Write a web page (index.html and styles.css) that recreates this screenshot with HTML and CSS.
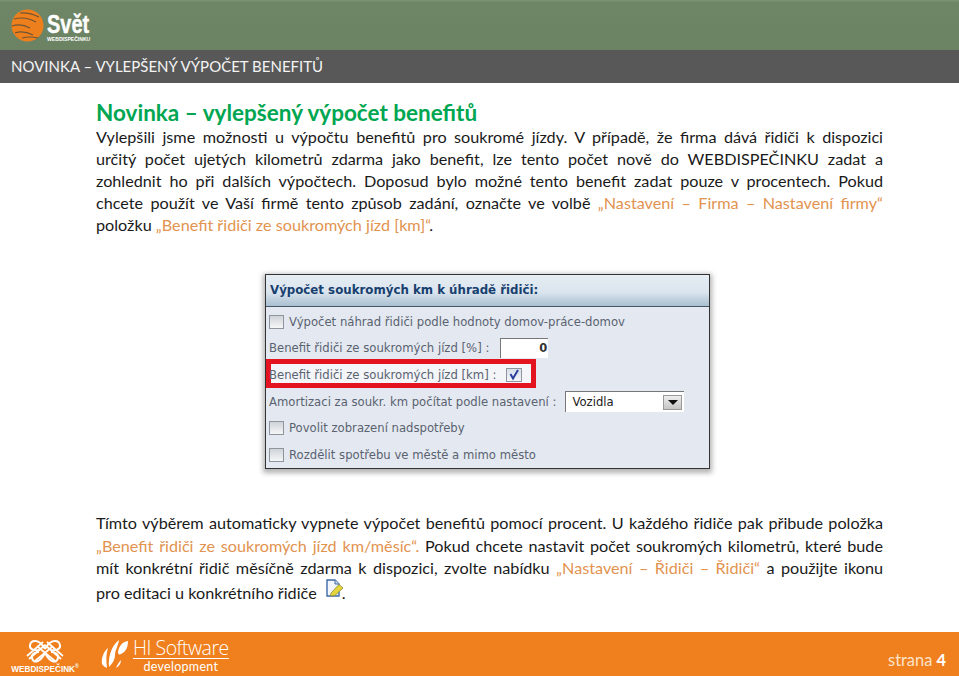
FILE: index.html
```html
<!DOCTYPE html>
<html lang="cs">
<head>
<meta charset="utf-8">
<title>Novinka</title>
<link rel="stylesheet" href="styles.css">
</head>
<body>
<div class="slide">
  <header class="top">
    <svg class="globe" width="33" height="33" viewBox="0 0 33 33">
      <circle cx="16.5" cy="16.5" r="16" fill="#ee7f1d"/>
      <path d="M9 4 Q18 3 28 8M3 10 Q14 7 25 13M1 17 Q10 14 19 19M4 24 Q12 21 22 26M11 29 Q18 27 27 29" stroke="#6e5535" stroke-width="1.2" fill="none"/>
    </svg>
    <div class="brand">
      <span class="brand-big">Svět</span>
      <span class="brand-small">WEBDISPEČINKU</span>
    </div>
  </header>
  <div class="titlebar">NOVINKA – VYLEPŠENÝ VÝPOČET BENEFITŮ</div>
  <main class="content">
    <h1>Novinka – vylepšený výpočet benefitů</h1>
    <p class="para">
      <span class="ln">Vylepšili jsme možnosti u výpočtu benefitů pro soukromé jízdy. V případě, že firma dává řidiči k dispozici</span>
      <span class="ln">určitý počet ujetých kilometrů zdarma jako benefit, lze tento počet nově do WEBDISPEČINKU zadat a</span>
      <span class="ln">zohlednit ho při dalších výpočtech. Doposud bylo možné tento benefit zadat pouze v procentech. Pokud</span>
      <span class="ln">chcete použít ve Vaší firmě tento způsob zadání, označte ve volbě <span class="hl">„Nastavení – Firma – Nastavení firmy“</span></span>
      <span class="ln end">položku <span class="hl">„Benefit řidiči ze soukromých jízd [km]“</span>.</span>
    </p>
    <div class="shot-wrap">
      <div class="shot">
        <div class="shot-head">Výpočet soukromých km k úhradě řidiči:</div>
        <div class="shot-body">
          <div class="row"><span class="cb"></span><span>Výpočet náhrad řidiči podle hodnoty domov-práce-domov</span></div>
          <div class="row"><span>Benefit řidiči ze soukromých jízd [%] :</span><span class="input">0</span></div>
          <div class="row"><span>Benefit řidiči ze soukromých jízd [km] :</span><span class="cb checked"><svg width="14" height="12" viewBox="0 0 14 12"><path d="M3.5 5 L6 9.5 L11 1" stroke="#2b3f9e" stroke-width="2" fill="none"/></svg></span></div>
          <div class="row"><span>Amortizaci za soukr. km počítat podle nastavení :</span><span class="select"><span>Vozidla</span><span class="arrow"></span></span></div>
          <div class="row"><span class="cb"></span><span>Povolit zobrazení nadspotřeby</span></div>
          <div class="row"><span class="cb"></span><span>Rozdělit spotřebu ve městě a mimo město</span></div>
        </div>
        <div class="redbox"></div>
      </div>
    </div>
    <p class="para">
      <span class="ln">Tímto výběrem automaticky vypnete výpočet benefitů pomocí procent. U každého řidiče pak přibude položka</span>
      <span class="ln"><span class="hl">„Benefit řidiči ze soukromých jízd km/měsíc“.</span> Pokud chcete nastavit počet soukromých kilometrů, které bude</span>
      <span class="ln">mít konkrétní řidič měsíčně zdarma k dispozici, zvolte nabídku <span class="hl">„Nastavení – Řidiči – Řidiči“</span> a použijte ikonu</span>
      <span class="ln end">pro editaci u konkrétního řidiče <svg class="edit" width="19" height="19" viewBox="0 0 19 19"><path d="M2 1H10L14 5V17H2Z" fill="#f3f6fc" stroke="#3d6aa8" stroke-width="1.4"/><path d="M10 1V5H14" fill="#cfdcf0" stroke="#3d6aa8"/><path d="M6 14 L14 5.5 L18 9 L10 16.5 L5.5 17Z" fill="#e3d53c" stroke="#8f8a2e" stroke-width=".8"/></svg>.</span>
    </p>
  </main>
  <footer class="foot">
    <div class="wd">
      <svg width="42" height="24" viewBox="0 0 42 24" fill="none" stroke="#fff" stroke-width="2">
        <path d="M21 10 C15 -1 7 1 6 6 C5 10 10 12 15 11 M21 10 C27 -1 35 1 36 6 C37 10 32 12 27 11"/>
        <path d="M21 14 C15 25 9 24 8 19 C7 15 11 13 15 13 M21 14 C27 25 33 24 34 19 C35 15 31 13 27 13"/>
        <path d="M3 17 L19 3M5 20 L21 6M39 17 L23 3M37 20 L21 6M14 8 L31 22M28 8 L11 22" stroke-width="1.7"/>
      </svg>
      <span class="wd-text">WEBDISPEČINK<sup>®</sup></span>
    </div>
    <div class="hi">
      <svg width="28" height="30" viewBox="0 0 28 30" fill="#fff">
        <path d="M1 25 C0 19 3 12 7 9 C5 15 5 21 6 29 C4 28 2 27 1 25Z"/>
        <path d="M8 28 C7 19 10 7 18 1 C17 8 14 11 14 16 C14 21 11 25 8 28Z"/>
        <path d="M17 13 C18 7 21 3 27 2 C27 8 25 13 20 15 C18 16 17 15 17 13Z"/>
        <path d="M15 29 C16 26 18 23 20 21 C20 25 18 27 15 29Z"/>
      </svg>
      <div class="hi-text">
        <span class="hi-name">HI Software</span>
        <span class="hi-dev">development</span>
      </div>
    </div>
    <div class="page">strana <b>4</b></div>
  </footer>
</div>
</body>
</html>
```
FILE: styles.css
```css
html, body { margin: 0; padding: 0; }
body { font-family: "Lato", "Liberation Sans", sans-serif; background: #fff; }
.slide { width: 959px; height: 676px; display: flex; flex-direction: column; overflow: hidden; }
.top { height: 50px; box-sizing: border-box; background: linear-gradient(#7f9576, #6e8665 5%, #6b8363); display: flex; align-items: center; gap: 3px; padding-left: 11px; }
.brand { display: flex; flex-direction: column; color: #fff; padding-top: 4px; }
.brand-big { font-family: "Liberation Sans", sans-serif; font-weight: 700; font-size: 25px; line-height: 24px; transform: scaleX(.8); transform-origin: left; -webkit-text-stroke: .4px #fff; }
.brand-small { font-family: "Liberation Sans", sans-serif; font-weight: 700; font-size: 5.1px; line-height: 7px; }
.titlebar { height: 33px; background: #585858; color: #f4f4f4; font-size: 15px; line-height: 33px; padding-left: 11px; }
.content { flex: 1; padding: 17px 76px 0 96px; color: #1a1a1a; }
h1 { margin: 0; font-size: 22.5px; line-height: 26px; font-weight: 700; color: #00a651; }
.para { margin: 0; font-size: 16.2px; line-height: 22.1px; }
.ln { display: block; text-align: justify; text-align-last: justify; white-space: nowrap; }
.ln.end { text-align-last: left; }
.hl { color: #e2934f; }
.shot-wrap { padding: 38px 0 43px 169px; }
.shot { position: relative; width: 445px; height: 195px; box-sizing: border-box; border: 1px solid #333; box-shadow: 0 2px 5px 2px rgba(0,0,0,.3); font-family: "DejaVu Sans", sans-serif; font-size: 11.65px; color: #5a6270; background: #e4e9f1; }
.shot-head { height: 32px; box-sizing: border-box; border-bottom: 1px solid #456; background: linear-gradient(#e6edf3, #dbe5ee 55%, #a9bfd0); color: #17406f; font-weight: 700; font-size: 11.8px; line-height: 31px; padding-left: 4px; }
.shot-body { padding: 1px 3px 0; display: flex; flex-direction: column; }
.row { position: relative; z-index: 1; height: 26.65px; display: flex; align-items: center; gap: 5px; white-space: nowrap; }
.cb { width: 15px; height: 14px; box-sizing: border-box; flex: none; border: 1px solid #8f959c; background: linear-gradient(#cfd3d8, #f5f6f7); display: flex; }
.cb.checked { width: 16px; margin-left: 5px; background: linear-gradient(#d8deea, #f5f6fa); }
.input { width: 48px; height: 20px; background: #fff; border-left: 1px solid #777; border-top: 1px solid #777; margin-left: 6px; text-align: right; line-height: 19px; padding-right: 1px; color: #333; font-weight: 700; font-size: 11.5px; box-sizing: border-box; }
.select { width: 119px; height: 21px; margin-left: 4px; background: #fff; border-left: 1px solid #777; border-top: 1px solid #777; display: flex; align-items: center; justify-content: space-between; padding: 0 2px 0 6px; color: #222; box-sizing: border-box; }
.arrow { width: 19px; height: 15px; background: linear-gradient(#eee, #c5c5c5); border: 1px solid #999; box-sizing: border-box; display: flex; align-items: center; justify-content: center; }
.arrow::after { content: ""; border-left: 5px solid transparent; border-right: 5px solid transparent; border-top: 5px solid #111; }
.redbox { position: absolute; z-index: 0; left: 0; top: 84px; width: 270px; height: 29px; box-sizing: border-box; border: 5px solid #e3141f; background: #f3f5f8; }
.edit { vertical-align: 1px; margin-left: 4px; margin-right: -2px; }
.foot { height: 44px; background: #f07f1e; display: flex; align-items: center; color: #fff; padding: 0 13px 0 11px; }
.wd { width: 68px; height: 44px; display: flex; flex-direction: column; align-items: center; }
.wd svg { margin-top: 7px; }
.wd-text { font-family: "Liberation Sans", sans-serif; font-weight: 700; font-size: 8.2px; line-height: 10px; margin-top: 2px; }
.wd-text sup { font-size: 5px; line-height: 0; }
.hi { display: flex; gap: 4px; margin-left: 22px; align-items: center; }
.hi-text { display: flex; flex-direction: column; align-items: center; padding-top: 3px; }
.hi-name { font-size: 19.5px; line-height: 19px; font-weight: 300; border-bottom: 1px solid #fff; font-family: "Open Sans", sans-serif; letter-spacing: -.5px; padding-bottom: 1px; }
.hi-dev { font-size: 12.5px; line-height: 15px; font-family: "Lato", sans-serif; letter-spacing: .3px; }
.page { margin-left: auto; font-size: 16.4px; padding-top: 10px; color: #fde3c8; }
.page b { color: #fff; }
```
